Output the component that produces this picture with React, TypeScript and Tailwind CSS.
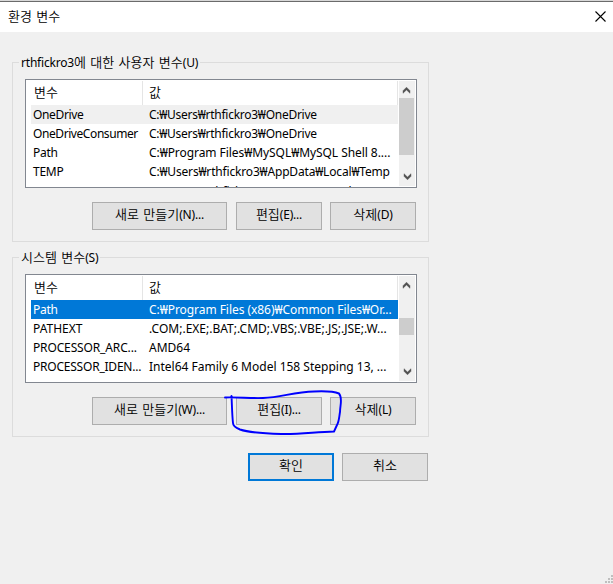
type Row = {
  name: string;
  value: string;
  nameClass?: string;
  valueClass?: string;
};

type GroupProps = {
  title: string;
  rows: Row[];
  activeClass: string;
  thumbClass: string;
  buttons: { label: string; className: string }[];
};

const userVariables: Row[] = [
  {
    name: "OneDrive",
    value: "C:₩Users₩rthfickro3₩OneDrive",
    nameClass: "tracking-[-0.35px]",
    valueClass: "tracking-[-0.26px]",
  },
  {
    name: "OneDriveConsumer",
    value: "C:₩Users₩rthfickro3₩OneDrive",
    nameClass: "tracking-[-0.42px]",
    valueClass: "tracking-[-0.26px]",
  },
  { name: "Path", value: "C:₩Program Files₩MySQL₩MySQL Shell 8....", nameClass: "tracking-[-0.3px]", valueClass: "tracking-[-0.06px]" },
  { name: "TEMP", value: "C:₩Users₩rthfickro3₩AppData₩Local₩Temp", nameClass: "tracking-[-0.25px]", valueClass: "tracking-[-0.17px]" },
  { name: "TMP", value: "C:₩Users₩rthfickro3₩AppData₩Local₩Temp", nameClass: "relative top-0.5", valueClass: "relative top-px tracking-[-0.17px]" },
];

const systemVariables: Row[] = [
  { name: "Path", value: "C:₩Program Files (x86)₩Common Files₩Or...", nameClass: "tracking-[-0.3px]", valueClass: "tracking-[-0.05px]" },
  { name: "PATHEXT", value: ".COM;.EXE;.BAT;.CMD;.VBS;.VBE;.JS;.JSE;.W..." },
  { name: "PROCESSOR_ARC...", value: "AMD64", nameClass: "tracking-[-0.14px]" },
  { name: "PROCESSOR_IDEN...", value: "Intel64 Family 6 Model 158 Stepping 13, ...", nameClass: "tracking-[-0.22px]" },
];

// Hangul runs are set one size up from the latin text around them
const Label = ({ text }: { text: string }) => (
  <span className="tracking-[-0.2px] whitespace-pre">
    {text.split(/([가-힣]+(?: [가-힣]+)*)/).map((part, index) =>
      index % 2 ? (
        <span key={index} className="text-[13px] leading-none font-[350] tracking-normal [word-spacing:1px]">
          {part}
        </span>
      ) : (
        part
      )
    )}
  </span>
);

const Button = ({ label, className }: { label: string; className: string }) => (
  <button className={`flex h-7 items-center justify-center border bg-[#e1e1e1] pb-0.5 ${className}`}>
    <Label text={label} />
  </button>
);

const Arrow = ({ down = false }: { down?: boolean }) => (
  <svg className={down ? "block rotate-180" : "block"} width="16" height="17" viewBox="0 0 16 17">
    <path d="M4 9.700 7.500 6.200 11 9.700V12.300L7.500 8.900 4 12.300Z" fill="#505050" stroke="#505050" strokeWidth=".4" />
  </svg>
);

const VariableGroup = ({ title, rows, activeClass, thumbClass, buttons }: GroupProps) => (
  <fieldset className="h-[188px] w-[417px] border border-[#dcdcdc] pl-3">
    <legend className="-ml-1.5 h-[17px] px-0.5 leading-[17px]">
      <Label text={title} />
    </legend>

    {/* Variable list */}
    <div className="mt-2 flex h-[109px] w-[392px] overflow-hidden border border-[#828790] bg-white">
      <div className="w-[373px] shrink-0 pl-[5px]">
        <div className="flex h-[25px] items-end">
          <div className="flex h-6 w-28 items-center border-r border-[#e5e5e5] pl-[3px]">
            <Label text="변수" />
          </div>
          <div className="flex h-6 w-[255px] items-center border-r border-[#e5e5e5] pl-1.5">
            <Label text="값" />
          </div>
        </div>
        {rows.map((row, index) => (
          <div key={index} className={`flex h-[19px] w-[367px] leading-[19px] whitespace-pre ${index === 0 ? activeClass : ""}`}>
            <div className="w-28 shrink-0 pl-0.5">
              <span className={row.nameClass}>{row.name}</span>
            </div>
            <div className="pl-1.5">
              <span className={row.valueClass}>{row.value}</span>
            </div>
          </div>
        ))}
      </div>
      {/* Scrollbar */}
      <div className="mt-px flex h-[105px] w-4 flex-col justify-between bg-[#f0f0f0]">
        <Arrow />
        <div className="grow">
          <div className={`w-[15px] bg-[#cdcdcd] ${thumbClass}`} />
        </div>
        <Arrow down />
      </div>
    </div>

    <div className="mt-3.5 ml-[67px] flex">
      {buttons.map((button) => (
        <Button key={button.label} {...button} />
      ))}
    </div>
  </fieldset>
);

const App = () => {
  return (
    <div className="relative h-[584px] w-[613px] overflow-hidden bg-[#f0f0f0] font-['Noto_Sans','Noto_Sans_CJK_KR',sans-serif] text-[12px] text-black">
      {/* Title bar */}
      <header className="flex h-8 items-center justify-between border-t border-[#d8d8d8] bg-white shadow-[inset_0_1px_0_#6b6b6b]">
        <h1 className="pl-2">
          <Label text="환경 변수" />
        </h1>
        <svg className="mr-[7px]" width="11" height="11" viewBox="0 0 11 11">
          <path d="M.5.5l10 10M10.5.5l-10 10" stroke="#000" strokeWidth="1.1" />
        </svg>
      </header>

      <main className="pt-[22px] pl-3">
        <VariableGroup
          title="rthfickro3에 대한 사용자 변수(U)"
          rows={userVariables}
          activeClass="bg-[#f0f0f0]"
          thumbClass="h-[57px]"
          buttons={[
            { label: "새로 만들기(N)...", className: "w-[135px] border-[#adadad]" },
            { label: "편집(E)...", className: "ml-[9px] w-[86px] border-[#adadad]" },
            { label: "삭제(D)", className: "ml-2 w-[86px] border-[#adadad]" },
          ]}
        />
        <div className="mt-[7px]">
          <VariableGroup
            title="시스템 변수(S)"
            rows={systemVariables}
            activeClass="bg-[#0078d7] text-white"
            thumbClass="mt-[25px] h-[17px]"
            buttons={[
              { label: "새로 만들기(W)...", className: "w-[135px] border-[#adadad]" },
              { label: "편집(I)...", className: "ml-[9px] w-[86px] border-[#adadad]" },
              { label: "삭제(L)", className: "ml-2 w-[86px] border-[#adadad]" },
            ]}
          />
        </div>
        <div className="mt-4 ml-[236px] flex gap-2">
          <Button label="확인" className="w-[86px] border-2 border-[#0078d7]" />
          <Button label="취소" className="w-[86px] border-[#adadad]" />
        </div>
      </main>

      {/* Pen mark around the edit button */}
      <svg className="pointer-events-none absolute top-[385px] left-[220px]" width="130" height="55" viewBox="0 0 130 55">
        <path
          d="M5 12.5C18 12 30 13.5 43 13C62 12 74 7 94 6.500C105 6 114 6.500 119 8.500C123 13 120 20 120 27C119 33 119 37 117 40L114 46.500C95 47 80 49.500 61 49C45 48.500 30 48 20 44.500C15 42.500 13 41 13 38C12 29 12 20 11.500 11"
          fill="none"
          stroke="#0000fe"
          strokeWidth="1.9"
          strokeLinecap="round"
          strokeLinejoin="round"
        />
      </svg>

      {/* Resize grip */}
      <svg className="absolute right-0 bottom-0" width="8" height="9" viewBox="0 0 8 9">
        <path d="M6 0h2v2H6zM3 3h2v2H3zM6 3h2v2H6zM0 6h2v2H0zM3 6h2v2H3zM6 6h2v2H6z" fill="#bfbfbf" />
      </svg>
    </div>
  );
};

export default App;
